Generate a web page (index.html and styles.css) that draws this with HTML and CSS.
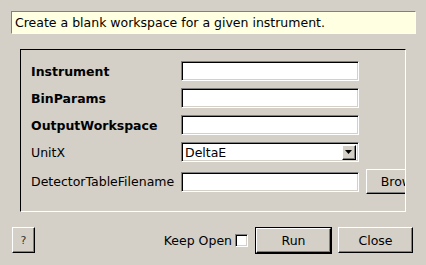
FILE: index.html
```html
<!DOCTYPE html>
<html>
<head>
<meta charset="utf-8">
<link rel="stylesheet" href="styles.css">
</head>
<body>
<div class="dialog">
  <div class="desc">Create a blank workspace for a given instrument.</div>
  <div class="group">
    <div class="rows">
      <div class="row">
        <span class="label bold">Instrument</span>
        <span class="field"></span>
      </div>
      <div class="row">
        <span class="label bold">BinParams</span>
        <span class="field"></span>
      </div>
      <div class="row">
        <span class="label bold">OutputWorkspace</span>
        <span class="field"></span>
      </div>
      <div class="row">
        <span class="label">UnitX</span>
        <span class="field combo"><span class="combo-text">DeltaE</span><span class="arrow"><svg width="7" height="4" viewBox="0 0 7 4"><path d="M0 0H7L3.5 4Z" fill="#000"/></svg></span></span>
      </div>
      <div class="row row-tall">
        <span class="label">DetectorTableFilename</span>
        <span class="field"></span>
        <span class="btn browse">Browse</span>
      </div>
    </div>
  </div>
  <div class="footer">
    <span class="btn help">?</span>
    <span class="spacer"></span>
    <span class="keep">Keep Open</span>
    <span class="check"></span>
    <span class="default"><span class="btn run">Run</span></span>
    <span class="btn close">Close</span>
  </div>
</div>
</body>
</html>
```

FILE: styles.css
```css
html, body {
  margin: 0;
  padding: 0;
  background: #d4d0c8;
}
body {
  width: 426px;
  height: 265px;
  overflow: hidden;
  font-family: "DejaVu Sans", sans-serif;
  font-size: 12.5px;
  color: #000;
}
.dialog {
  padding: 11px 10px 0 11px;
}
.desc {
  box-sizing: border-box;
  height: 23px;
  background: #ffffe1;
  border-top: 1px solid #808080;
  border-left: 1px solid #808080;
  border-right: 1px solid #fff;
  border-bottom: 1px solid #fff;
  padding-left: 3px;
  display: flex;
  align-items: center;
}
.group {
  box-sizing: border-box;
  margin: 15px 10px 0 9px;
  height: 163px;
  border-top: 1px solid #000;
  border-left: 1px solid #000;
  border-right: 1px solid #fff;
  border-bottom: 1px solid #fff;
  overflow: hidden;
  padding: 11px 0 0 10px;
}
.rows {
  display: flex;
  flex-direction: column;
  gap: 7px;
}
.row {
  display: flex;
  align-items: center;
  height: 20px;
  white-space: nowrap;
}
.row-tall {
  height: 25px;
}
.label {
  width: 150px;
  flex: none;
}
.bold {
  font-weight: bold;
}
.field {
  box-sizing: border-box;
  flex: none;
  width: 178px;
  height: 20px;
  background: #fff;
  border-top: 1px solid #808080;
  border-left: 1px solid #808080;
  border-right: 1px solid #fff;
  border-bottom: 1px solid #fff;
  box-shadow: inset 1px 1px 0 #000, inset -1px -1px 0 #d4d0c8;
}
.combo {
  display: flex;
  align-items: center;
  padding: 2px 2px 2px 3px;
}
.combo-text {
  flex: 1;
}
.arrow {
  box-sizing: border-box;
  width: 14px;
  height: 15px;
  background: #d4d0c8;
  border-top: 1px solid #fff;
  border-left: 1px solid #fff;
  border-right: 1px solid #000;
  border-bottom: 1px solid #000;
  box-shadow: inset -1px -1px 0 #808080;
  display: flex;
  align-items: center;
  justify-content: center;
  padding-right: 1px;
  padding-bottom: 1px;
}
.arrow svg {
  display: block;
}
.btn {
  box-sizing: border-box;
  display: flex;
  align-items: center;
  justify-content: center;
  background: #d4d0c8;
  border-top: 1px solid #fff;
  border-left: 1px solid #fff;
  border-right: 1px solid #000;
  border-bottom: 1px solid #000;
  box-shadow: inset -1px -1px 0 #808080;
  flex: none;
}
.browse {
  margin-left: 7px;
  width: 75px;
  height: 25px;
}
.footer {
  display: flex;
  align-items: center;
  margin: 15px 3px 0 1px;
  height: 26px;
}
.help {
  width: 23px;
  height: 26px;
  font-size: 11px;
  color: #333;
}
.spacer {
  flex: 1;
}
.keep {
  margin-right: 3px;
}
.check {
  box-sizing: border-box;
  width: 13px;
  height: 13px;
  background: #fff;
  border-top: 1px solid #808080;
  border-left: 1px solid #808080;
  border-right: 1px solid #fff;
  border-bottom: 1px solid #fff;
  box-shadow: inset 1px 1px 0 #000, inset -1px -1px 0 #d4d0c8;
  margin-right: 7px;
}
.default {
  box-sizing: border-box;
  border: 1px solid #000;
  width: 77px;
  height: 27px;
  display: flex;
}
.run {
  width: 75px;
  height: 25px;
}
.close {
  margin-left: 6px;
  width: 75px;
  height: 26px;
}
```
